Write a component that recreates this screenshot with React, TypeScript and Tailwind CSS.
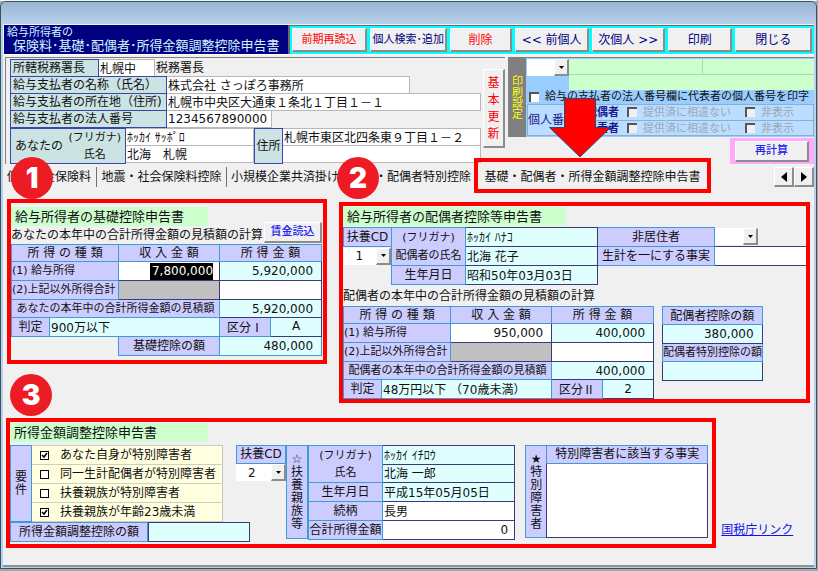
import { useState } from 'react';
import type { ReactNode } from 'react';
import clsx from 'clsx';

const raised = 'border-t border-l border-r-2 border-b-2 border-t-white border-l-white border-r-[#8c8c8c] border-b-[#8c8c8c] bg-[#f0f0f0]';
const headCell = 'border border-[#3f9bd6] bg-[#ccccff] p-0 text-center font-normal whitespace-nowrap';
const dataCell = 'border border-[#3a3a7a] p-0';

function ToolButton({ children, className }: { children: ReactNode; className: string }) {
  return (
    <button type="button" className={clsx('h-6 whitespace-nowrap', raised, className)}>
      {children}
    </button>
  );
}

function Field({ label, value, className }: { label: string; value: string; className?: string }) {
  // kanji values sit lower in the box than plain figures do
  const numeric = /^[\d,]*$/.test(value);
  return (
    <input
      aria-label={label}
      defaultValue={value}
      className={clsx('block min-w-0 outline-none', !numeric && 'pb-0.5', className)}
    />
  );
}

function Amount({ label, value = '' }: { label: string; value?: string }) {
  return <Field label={label} value={value} className="h-[17px] w-full pr-2 text-right" />;
}

function Combo({ label, value, className }: { label: string; value: string; className?: string }) {
  return (
    <div className={clsx('relative h-[17px] bg-white', className)}>
      <select
        aria-label={label}
        defaultValue={value}
        className="block h-full w-full appearance-none bg-white pl-3 outline-none"
      >
        <option value="" />
        <option value="1">1</option>
        <option value="2">2</option>
      </select>
      <span className={clsx('pointer-events-none absolute top-0 right-0 flex h-full w-[15px] items-center justify-center', raised)}>
        <svg width="5" height="3" viewBox="0 0 5 3">
          <path d="M0 0h5L2.5 3z" fill="#000" />
        </svg>
      </span>
    </div>
  );
}

function Badge({ n, className }: { n: number; className: string }) {
  return (
    <span
      className={clsx(
        'absolute z-10 flex size-[42px] items-center justify-center rounded-full bg-[#ed1c24] font-[Inter] text-[28px] leading-none font-black text-white',
        className
      )}
    >
      {n}
    </span>
  );
}

function SectionTitle({ children, className }: { children: ReactNode; className: string }) {
  return <h2 className={clsx('h-[19px] bg-[#ccffcc] pl-1 text-[13px] leading-[19px]', className)}>{children}</h2>;
}

type IncomeProps = {
  who: string;
  salary: ReactNode;
  salaryIncome: string;
  judge: string;
  group: string;
  groupValue: string;
  footer?: ReactNode;
};

function IncomeTable({ who, salary, salaryIncome, judge, group, groupValue, footer }: IncomeProps) {
  return (
    <table className="w-full table-fixed border-collapse">
      <colgroup>
        <col className="w-[38px]" />
        <col className="w-[69px]" />
        <col className="w-[101px]" />
        <col className="w-[51px]" />
        <col className="w-[51px]" />
      </colgroup>
      <thead>
        <tr className="h-[17px]">
          <th colSpan={2} className={headCell}>所 得 の 種 類</th>
          <th className={headCell}>収 入 金 額</th>
          <th colSpan={2} className={headCell}>所 得 金 額</th>
        </tr>
      </thead>
      <tbody>
        <tr className="h-[19px]">
          <th colSpan={2} className={clsx(headCell, 'text-left text-[11px]')}>(1) 給与所得</th>
          <td className={clsx(dataCell, 'bg-white')}>{salary}</td>
          <td colSpan={2} className={clsx(dataCell, 'bg-[#dfffff]')}>
            <Amount label={`${who}給与所得 所得金額`} value={salaryIncome} />
          </td>
        </tr>
        <tr className="h-[19px]">
          <th colSpan={2} className={clsx(headCell, 'text-left text-[11px]')}>(2)上記以外所得合計</th>
          <td className={clsx(dataCell, 'bg-[#c0c0c0]')} />
          <td colSpan={2} className={clsx(dataCell, 'bg-white')}>
            <Amount label={`${who}上記以外所得合計`} />
          </td>
        </tr>
        <tr className="h-[18px]">
          <th colSpan={3} className={clsx(headCell, 'text-[11px]')}>{who}本年中の合計所得金額の見積額</th>
          <td colSpan={2} className={clsx(dataCell, 'bg-[#dfffff]')}>
            <Amount label={`${who}合計所得金額の見積額`} value={salaryIncome} />
          </td>
        </tr>
        <tr className="h-[19px]">
          <th className={headCell}>判定</th>
          <td colSpan={2} className="border border-[#3f9bd6] bg-[#dfffff] p-0">
            <Field label={`${who}判定`} value={judge} className="h-[17px] w-full pl-px" />
          </td>
          <th className={clsx(headCell, "font-['Noto_Sans_CJK_JP',sans-serif]")}>{group}</th>
          <td className={clsx(dataCell, 'bg-[#dfffff]')}>
            <Field label={group} value={groupValue} className="h-[17px] w-full text-center" />
          </td>
        </tr>
        {footer}
      </tbody>
    </table>
  );
}

function EmployerLabel({ children, className }: { children: ReactNode; className: string }) {
  return (
    <div className={clsx('-mt-px h-[18px] shrink-0 border border-[#3c46a8] bg-[#cce3e3] pl-0.5 leading-4 whitespace-nowrap', className)}>
      {children}
    </div>
  );
}

const employerInput = '-mt-px h-[18px] border border-l-0 border-[#b8b8b8] bg-white pl-px';

function EmployerPanel() {
  return (
    <div className="flex min-w-0 flex-[499] justify-between border-t border-l border-[#808080] pt-px">
      <div className="min-w-0 flex-1 pt-px pl-1">
        <div className="flex">
          <EmployerLabel className="w-[89px]">所轄税務署長</EmployerLabel>
          <Field label="所轄税務署長" value="札幌中" className={clsx(employerInput, 'w-14')} />
          <span className="pl-px leading-4">税務署長</span>
        </div>
        <div className="flex">
          <EmployerLabel className="w-[157px]">給与支払者の名称（氏名）</EmployerLabel>
          <Field label="給与支払者の名称" value="株式会社 さっぽろ事務所" className={clsx(employerInput, 'w-[243px]')} />
        </div>
        <div className="flex">
          <EmployerLabel className="w-[157px]">給与支払者の所在地（住所)</EmployerLabel>
          <Field label="給与支払者の所在地" value="札幌市中央区大通東１条北１丁目１－１" className={clsx(employerInput, 'flex-1')} />
        </div>
        <div className="flex">
          <EmployerLabel className="w-[157px]">給与支払者の法人番号</EmployerLabel>
          <Field label="給与支払者の法人番号" value="1234567890000" className={clsx(employerInput, 'w-[105px]')} />
        </div>
        <div className="flex">
          <div className="flex h-9 w-[116px] shrink-0 items-center justify-between border border-[#3c46a8] bg-[#cce3e3] pr-1 pl-1">
            <span>あなたの</span>
            <span className="text-center text-[11px] leading-[17px]">
              (フリガナ)
              <br />
              氏名
            </span>
          </div>
          <div className="w-32 pt-px">
            <Field label="フリガナ" value="ﾎｯｶｲ ｻｯﾎﾟﾛ" className={clsx(employerInput, 'w-full')} />
            <Field label="氏名" value="北海　札幌" className={clsx(employerInput, 'w-full')} />
          </div>
          <div className="flex h-9 w-[29px] shrink-0 items-center justify-center border border-[#3c46a8] bg-[#cce3e3]">住所</div>
          <div className="min-w-0 flex-1 pt-px">
            <Field label="住所1" value="札幌市東区北四条東９丁目１－２" className={clsx(employerInput, 'w-full')} />
            <Field label="住所2" value="" className={clsx(employerInput, 'w-full')} />
          </div>
        </div>
      </div>
      <button type="button" className={clsx('mt-[10px] ml-0.5 flex h-[79px] w-[22px] justify-center pt-[5px] text-[#ff0000]', raised)}>
        <span className="block w-3 text-[12px] leading-[17px] break-all">基本更新</span>
      </button>
    </div>
  );
}

function SunkenCheck({ label, disabled }: { label: string; disabled?: boolean }) {
  return (
    <input
      type="checkbox"
      aria-label={label}
      disabled={disabled}
      className={clsx(
        'size-[10px] shrink-0 appearance-none border-t-2 border-l-2 border-t-[#555] border-l-[#555]',
        disabled ? 'bg-[#f0f0f0]' : 'bg-white'
      )}
    />
  );
}

function PrintPanel() {
  return (
    <div className="flex h-20 border-t border-l border-[#808080] bg-[#99ccff]">
      <div className="flex w-[17px] shrink-0 items-center justify-center bg-[#808080]">
        <span className="block w-[11px] text-[11px] leading-[11px] break-all text-[#ffff00]">印刷設定</span>
      </div>
      <div className="flex min-w-0 flex-1 flex-col pt-px pl-px">
        <div className="flex">
          <div className="w-[42px] shrink-0">
            <Combo label="印刷設定" value="" />
          </div>
          <div className="grid flex-1 grid-cols-[133fr_110fr] bg-[#ccffcc]">
            <div className="h-4 border-r border-b border-[#a8d8c0]" />
            <div className="h-4 border-b border-[#a8d8c0]" />
            <div className="col-span-2 h-[15px]" />
          </div>
        </div>
        <label className="flex h-[14px] items-center gap-1.5 pl-0.5 text-[11px] leading-[14px] whitespace-nowrap">
          <SunkenCheck label="代表者の個人番号を印字" />
          給与の支払者の法人番号欄に代表者の個人番号を印字
        </label>
        <div className="flex h-8 items-center border border-[#8ab0d0] bg-[#bbddff]">
          <div className="w-[58px] text-[#1a1a90]">個人番号</div>
          <div className="flex-1 text-[11px] leading-[15px]">
            {['配偶者', '扶養者'].map((who) => (
              <div key={who} className="flex items-center border-b border-[#8ab0d0] last:border-b-0">
                <span className="font-bold text-[#1a1a90]">{who}</span>
                <label className="ml-2 flex w-[118px] items-center gap-1.5 whitespace-nowrap text-[#98a8b8]">
                  <SunkenCheck label={`${who} 提供済に相違ない`} disabled />
                  提供済に相違ない
                </label>
                <label className="flex items-center gap-1.5 whitespace-nowrap text-[#98a8b8]">
                  <SunkenCheck label={`${who} 非表示`} disabled />
                  非表示
                </label>
              </div>
            ))}
          </div>
        </div>
      </div>
    </div>
  );
}

function TabBar() {
  const tab = 'h-5 border-r border-[#707070] px-1 whitespace-nowrap';
  return (
    <div className="mt-px flex h-6 items-center">
      <button type="button" className={clsx(tab, 'w-[94px] text-left')}>個人年金保険料</button>
      <button type="button" className={clsx(tab, 'w-[130px]')}>地震・社会保険料控除</button>
      <button type="button" className="h-5 w-[248px] px-1 text-left whitespace-nowrap">小規模企業共済掛け金控除・配偶者特別控除</button>
      <button type="button" className="relative h-5 w-[235px] whitespace-nowrap">
        基礎・配偶者・所得金額調整控除申告書
        <span className="absolute -inset-x-px -top-[9px] -bottom-[6px] border-4 border-[#ff0000]" />
        <svg className="absolute -top-[69px] left-[73px]" width="64" height="60" viewBox="0 0 64 60">
          <path d="M16.500 .5h31v29h15L32 59 1.500 29.500h15z" fill="#f00" stroke="#284a7c" />
        </svg>
      </button>
      <div className="ml-auto flex">
        <button type="button" aria-label="前のタブ" className={clsx('flex h-5 w-5 items-center justify-center', raised)}>
          <svg width="6" height="10" viewBox="0 0 6 10"><path d="M6 0v10L0 5z" /></svg>
        </button>
        <button type="button" aria-label="次のタブ" className={clsx('flex h-5 w-5 items-center justify-center', raised)}>
          <svg width="6" height="10" viewBox="0 0 6 10"><path d="M0 0v10l6-5z" /></svg>
        </button>
      </div>
    </div>
  );
}

function BasicDeduction() {
  return (
    <section className="relative flex-[318] border-4 border-[#ff0000] pt-1 pr-px pb-1">
      <Badge n={1} className="-top-[46px] left-0" />
      <SectionTitle className="w-[197px]">給与所得者の基礎控除申告書</SectionTitle>
      <div className="relative h-[18px] leading-[18px] whitespace-nowrap">
        あなたの本年中の合計所得金額の見積額の計算
        <button
          type="button"
          className={clsx('absolute -top-1 right-0 h-[21px] w-[58px] text-[11px] leading-4 font-medium text-[#2222ee]', raised)}
        >
          賃金読込
        </button>
      </div>
      <IncomeTable
        who="あなたの"
        salary={
          <Field
            label="給与所得 収入金額"
            value="7,800,000"
            className="mr-1.5 ml-auto h-[17px] w-[63px] bg-black text-right text-white"
          />
        }
        salaryIncome="5,920,000"
        judge="900万以下"
        group="区分Ⅰ"
        groupValue="A"
        footer={
          <tr className="h-[19px]">
            <td colSpan={2} className="p-0" />
            <th className={headCell}>基礎控除の額</th>
            <td colSpan={2} className="border border-[#3f9bd6] bg-[#dfffff] p-0">
              <Amount label="基礎控除の額" value="480,000" />
            </td>
          </tr>
        }
      />
    </section>
  );
}

function SpouseDeduction() {
  return (
    <section className="relative mt-[3px] flex-[471] border-4 border-[#ff0000]">
      <Badge n={2} className="-top-[49px] -left-1.5" />
      <SectionTitle className="mt-px w-[223px]">給与所得者の配偶者控除等申告書</SectionTitle>
      <table className="mt-px w-full table-fixed border-collapse">
        <colgroup>
          <col className="w-12" />
          <col className="w-[74px]" />
          <col className="w-[132px]" />
          <col className="w-[117px]" />
          <col className="w-[91px]" />
        </colgroup>
        <tbody>
          <tr className="h-[19px]">
            <th className={headCell}>扶養CD</th>
            <th rowSpan={2} className={clsx(headCell, 'text-[11px] leading-[18px]')}>
              (フリガナ)
              <br />
              配偶者の氏名
            </th>
            <td className={clsx(dataCell, 'bg-[#dfffff]')}>
              <Field label="配偶者フリガナ" value="ﾎｯｶｲ ﾊﾅｺ" className="h-[17px] w-full pl-px" />
            </td>
            <th className={headCell}>非居住者</th>
            <td className="p-0">
              <Combo label="非居住者" value="" className="w-[43px]" />
            </td>
          </tr>
          <tr className="h-[19px]">
            <td className="p-0">
              <Combo label="扶養CD" value="1" />
            </td>
            <td className={clsx(dataCell, 'bg-[#dfffff]')}>
              <Field label="配偶者の氏名" value="北海 花子" className="h-[17px] w-full pl-px" />
            </td>
            <th className={headCell}>生計を一にする事実</th>
            <td className={clsx(dataCell, 'border-r-0 bg-white')}>
              <Field label="生計を一にする事実" value="" className="h-[17px] w-full" />
            </td>
          </tr>
          <tr className="h-[19px]">
            <td className="p-0" />
            <th className={headCell}>生年月日</th>
            <td className={clsx(dataCell, 'bg-[#dfffff]')}>
              <Field label="配偶者の生年月日" value="昭和50年03月03日" className="h-[17px] w-full pl-px" />
            </td>
          </tr>
        </tbody>
      </table>
      <p className="mt-0.5 leading-[19px] whitespace-nowrap">配偶者の本年中の合計所得金額の見積額の計算</p>
      <div className="flex items-start gap-2">
        <div className="flex-[309]">
          <IncomeTable
            who="配偶者の"
            salary={<Amount label="配偶者の給与所得 収入金額" value="950,000" />}
            salaryIncome="400,000"
            judge="48万円以下 （70歳未満）"
            group="区分Ⅱ"
            groupValue="2"
          />
        </div>
        <div className="flex-[145] pr-[43px]">
          <table className="w-full table-fixed border-collapse">
            <tbody>
              <tr className="h-[18px]">
                <th className={headCell}>配偶者控除の額</th>
              </tr>
              <tr className="h-[19px]">
                <td className={clsx(dataCell, 'bg-[#dfffff]')}>
                  <Amount label="配偶者控除の額" value="380,000" />
                </td>
              </tr>
              <tr className="h-[18px]">
                <th className={clsx(headCell, 'text-[11px]')}>配偶者特別控除の額</th>
              </tr>
              <tr className="h-[19px]">
                <td className={clsx(dataCell, 'bg-[#dfffff]')}>
                  <Amount label="配偶者特別控除の額" />
                </td>
              </tr>
            </tbody>
          </table>
        </div>
      </div>
    </section>
  );
}

const requirements = [
  'あなた自身が特別障害者',
  '同一生計配偶者が特別障害者',
  '扶養親族が特別障害者',
  '扶養親族が年齢23歳未満',
];

function VerticalHead({ children, className }: { children: ReactNode; className?: string }) {
  return (
    <div className={clsx('flex w-[22px] shrink-0 items-center justify-center border border-[#3f9bd6] bg-[#ccccff]', className)}>
      <span className="block w-3 text-center leading-[13px] break-all">{children}</span>
    </div>
  );
}

function AdjustmentDeduction() {
  const [checked, setChecked] = useState([true, false, false, true]);
  const toggle = (i: number) => setChecked(checked.map((c, j) => (i === j ? !c : c)));

  const family = [
    { label: '生年月日', value: '平成15年05月05日', className: 'bg-[#dfffff]' },
    { label: '続柄', value: '長男', className: 'bg-white' },
    { label: '合計所得金額', value: '0', className: 'bg-white text-right pr-1.5' },
  ];

  return (
    <section className="relative flex-[708] border-4 border-[#ff0000] pt-px pr-1 pb-0.5">
      <Badge n={3} className="-top-12 left-0" />
      <SectionTitle className="w-[198px]">所得金額調整控除申告書</SectionTitle>
      <div className="mt-[3px] flex items-start">
        <div className="w-[240px] shrink-0">
          <div className="flex pr-[27px]">
            <VerticalHead>要件</VerticalHead>
            <div className="flex-1 border-t border-r border-[#c8c8c8] bg-[#ffffdf]">
              {requirements.map((text, i) => (
                <label key={text} className="flex h-[19px] items-center gap-[11px] border-b border-[#d0d0c0] pl-2 whitespace-nowrap">
                  <span className="relative flex size-[9px] shrink-0">
                    <input
                      type="checkbox"
                      checked={checked[i]}
                      onChange={() => toggle(i)}
                      className="size-[9px] appearance-none border border-black bg-white"
                    />
                    {checked[i] && (
                      <svg className="pointer-events-none absolute inset-0" width="9" height="9" viewBox="0 0 9 9">
                        <path d="M2 4l2 2 3-4" fill="none" stroke="#000" strokeWidth="1.500" />
                      </svg>
                    )}
                  </span>
                  {text}
                </label>
              ))}
            </div>
          </div>
          <div className="flex h-5">
            <div className="w-[138px] border border-[#3f9bd6] bg-[#ccccff] text-center leading-[18px]">所得金額調整控除の額</div>
            <Field label="所得金額調整控除の額" value="" className="flex-1 border border-[#3a3a7a] bg-[#dfffff]" />
          </div>
        </div>

        <div className="-ml-[14px] w-[50px] shrink-0">
          <div className={clsx(headCell, 'h-[19px] leading-[17px]')}>扶養CD</div>
          <Combo label="扶養親族の扶養CD" value="2" />
        </div>
        <VerticalHead className="h-[94px]">☆扶養親族等</VerticalHead>
        <table className="flex-[206] table-fixed border-collapse">
          <tbody>
            <tr className="h-[19px]">
              <th rowSpan={2} className={clsx(headCell, 'w-[74px] leading-[17px]')}>
                <span className="text-[11px]">
                  (フリガナ)
                  <br />
                  氏名
                </span>
              </th>
              <td className={clsx(dataCell, 'bg-[#dfffff]')}>
                <Field label="扶養親族フリガナ" value="ﾎｯｶｲ ｲﾁﾛｳ" className="h-[17px] w-full pl-px" />
              </td>
            </tr>
            <tr className="h-[18px]">
              <td className={clsx(dataCell, 'bg-[#dfffff]')}>
                <Field label="扶養親族氏名" value="北海 一郎" className="h-[17px] w-full pl-px" />
              </td>
            </tr>
            {family.map((row) => (
              <tr key={row.label} className="h-[19px]">
                <th className={headCell}>{row.label}</th>
                <td className={clsx(dataCell, 'bg-white')}>
                  <Field label={row.label} value={row.value} className={clsx('h-[18px] w-full pl-px', row.className)} />
                </td>
              </tr>
            ))}
          </tbody>
        </table>

        <div className="ml-[10px] flex h-[93px] flex-[183]">
          <VerticalHead>★特別障害者</VerticalHead>
          <div className="-ml-px flex min-w-0 flex-1 flex-col">
            <label htmlFor="reason" className={clsx(headCell, 'h-[19px] leading-[17px]')}>特別障害者に該当する事実</label>
            <textarea id="reason" className="min-h-0 w-full flex-1 resize-none border border-t-0 border-[#3a3a7a] bg-white outline-none" />
          </div>
        </div>
      </div>
    </section>
  );
}

export default function App() {
  return (
    <div className="flex min-h-screen flex-col bg-[#a8a8a8] pr-px pb-0.5 font-['DejaVu_Sans','Noto_Sans_CJK_JP',sans-serif] text-[12px] leading-4 text-[#111]">
      <div className="h-px bg-[#f4f4f4]" />
      <div className="flex flex-1 flex-col rounded-t-md border border-[#2e5560] bg-[#b9d1ea] px-0.5 pb-px">
        <div className="-mx-0.5 h-[22px] rounded-t-md bg-linear-to-b from-[#98b4d4] to-[#b9d1ea]" />

        <div className="flex flex-1 flex-col bg-[#f0f0f0] pt-px">
          <header className="flex h-[30px] border-b border-white pl-px">
            <h1 className="flex-[284] bg-[#000080] pt-px pl-[3px] whitespace-nowrap text-[#d0f4ff]">
              <span className="block text-[11px] leading-[13px]">給与所得者の</span>
              <span className="block pl-1.5 text-[13px] leading-[14px]">保険料･基礎･配偶者･所得金額調整控除申告書</span>
            </h1>
            <div className="flex flex-[525] items-center gap-[3px] border-t border-l-2 border-[#6a6a6a] bg-[#00ffff] pr-0.5 pl-0.5">
              <ToolButton className="flex-[75] text-[11px] text-[#ff0000]">前期再読込</ToolButton>
              <ToolButton className="flex-[78] text-[11px] text-[#000080]">個人検索･追加</ToolButton>
              <ToolButton className="flex-[61] text-[#ff0000]">削除</ToolButton>
              <ToolButton className="flex-[75] text-[#000080]">&lt;&lt; 前個人</ToolButton>
              <ToolButton className="flex-[73] text-[#000080]">次個人 &gt;&gt;</ToolButton>
              <ToolButton className="flex-[64] text-[#000080]">印刷</ToolButton>
              <ToolButton className="flex-[77] text-[#000080]">閉じる</ToolButton>
            </div>
          </header>

          <div className="mt-0.5 flex gap-[3px] pl-0.5">
            <EmployerPanel />
            <div className="flex-[306]">
              <PrintPanel />
              <div className="mt-px ml-auto flex h-[26px] w-[84px] items-center justify-center bg-[#ffaaff]">
                <button type="button" className={clsx('h-[21px] w-[74px] text-[11px] leading-4 font-medium text-[#2222ee]', raised)}>
                  再計算
                </button>
              </div>
            </div>
          </div>

          <TabBar />

          <main className="flex flex-1 flex-col">
            <div className="mt-[10px] flex items-start gap-3 pr-[5px] pl-1">
              <BasicDeduction />
              <SpouseDeduction />
            </div>
            <div className="mt-[15px] flex items-end gap-[5px] pl-[3px]">
              <AdjustmentDeduction />
              <a href="#nta" className="mb-[10px] flex-[94] whitespace-nowrap text-[#1111ee] underline">国税庁リンク</a>
            </div>
          </main>
          <div className="h-0.5 bg-[#909090]" />
        </div>
      </div>
    </div>
  );
}
